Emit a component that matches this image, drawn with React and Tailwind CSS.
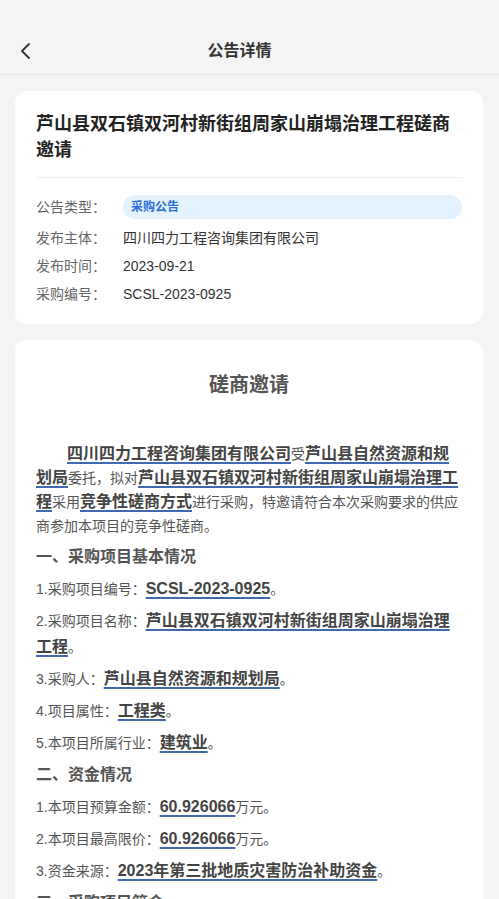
import React from "react";

const U = ({ children }) => (
  <span className="text-[16px] leading-[18px] font-bold text-[#444] underline decoration-[#4169b0] decoration-[1.5px] underline-offset-[3px]">
    {children}
  </span>
);

export default function App() {
  const font = { fontFamily: '"Liberation Sans", "Noto Sans CJK SC", "Noto Sans", sans-serif' };
  return (
    <div className="min-h-[899px] bg-[#f4f4f4] pb-4" style={font}>
      <div className="pt-[28px] border-b border-[#e6e6e6]">
        <div className="relative flex h-[46px] items-center justify-center">
          <div className="absolute left-[18px] top-0 flex h-[46px] items-center">
            <svg width="16" height="18" viewBox="0 0 16 18" fill="none">
              <polyline points="11,2 4,9 11,16" stroke="#333" strokeWidth="1.8" strokeLinecap="round" strokeLinejoin="round" />
            </svg>
          </div>
          <div className="mr-[20px] text-[16px] font-bold text-[#333]">公告详情</div>
        </div>
      </div>

      <div className="mx-[15px] mr-[16px] mt-4 rounded-[12px] bg-white px-[21px] pt-[20px] pb-[16px]">
        <div className="text-[18px] font-bold leading-[26px] text-[#222]">
          芦山县双石镇双河村新街组周家山崩塌治理工程磋商邀请
        </div>
        <div className="mt-[14px] h-px bg-[#eeeeee]" />
        <div className="mt-[17px] text-[14px]">
          <div className="flex h-[24px] items-center">
            <div className="w-[87px] text-[#666]">公告类型：</div>
            <div className="flex h-[24px] flex-1 items-center rounded-full bg-[#e4f2fd] pl-[8px] text-[12px] font-bold text-[#2b6fd6]">
              采购公告
            </div>
          </div>
          <div className="mt-[5px] flex h-[28px] items-center">
            <div className="w-[87px] text-[#666]">发布主体：</div>
            <div className="text-[#333]">四川四力工程咨询集团有限公司</div>
          </div>
          <div className="flex h-[28px] items-center">
            <div className="w-[87px] text-[#666]">发布时间：</div>
            <div className="text-[#333]">2023-09-21</div>
          </div>
          <div className="flex h-[28px] items-center">
            <div className="w-[87px] text-[#666]">采购编号：</div>
            <div className="text-[#333]">SCSL-2023-0925</div>
          </div>
        </div>
      </div>

      <div className="mx-[15px] mr-[16px] mt-4 rounded-[12px] bg-white px-[21px] pt-[30px] pb-6 text-[14px] text-[#555]">
        <div className="text-center text-[20px] font-bold leading-[30px] text-[#555]">磋商邀请</div>
        <p className="mt-[42px] mb-[6px] indent-[31px] leading-[24px]">
          <U>四川四力工程咨询集团有限公司</U>受<U>芦山县自然资源和规划局</U>委托，拟对<U>芦山县双石镇双河村新街组周家山崩塌治理工程</U>采用<U>竞争性磋商方式</U>进行采购，特邀请符合本次采购要求的供应商参加本项目的竞争性磋商。
        </p>
        <p className="mb-[6px] text-[16px] font-bold leading-[26px] text-[#555]">一、采购项目基本情况</p>
        <p className="mb-[6px] leading-[26px]">1.采购项目编号：<U>SCSL-2023-0925</U>。</p>
        <p className="mb-[6px] leading-[26px]">2.采购项目名称：<U>芦山县双石镇双河村新街组周家山崩塌治理工程</U>。</p>
        <p className="mb-[6px] leading-[26px]">3.采购人：<U>芦山县自然资源和规划局</U>。</p>
        <p className="mb-[6px] leading-[26px]">4.项目属性：<U>工程类</U>。</p>
        <p className="mb-[6px] leading-[26px]">5.本项目所属行业：<U>建筑业</U>。</p>
        <p className="mb-[6px] text-[16px] font-bold leading-[26px] text-[#555]">二、资金情况</p>
        <p className="mb-[6px] leading-[26px]">1.本项目预算金额：<U>60.926066</U>万元。</p>
        <p className="mb-[6px] leading-[26px]">2.本项目最高限价：<U>60.926066</U>万元。</p>
        <p className="mb-[6px] leading-[26px]">3.资金来源：<U>2023年第三批地质灾害防治补助资金</U>。</p>
        <p className="mb-[6px] text-[16px] font-bold leading-[26px] text-[#555]">三、采购项目简介</p>
        <p className="mb-[6px] leading-[26px]">本项目为芦山县双石镇双河村新街组周家山崩塌治理工程。</p>
      </div>
    </div>
  );
}
